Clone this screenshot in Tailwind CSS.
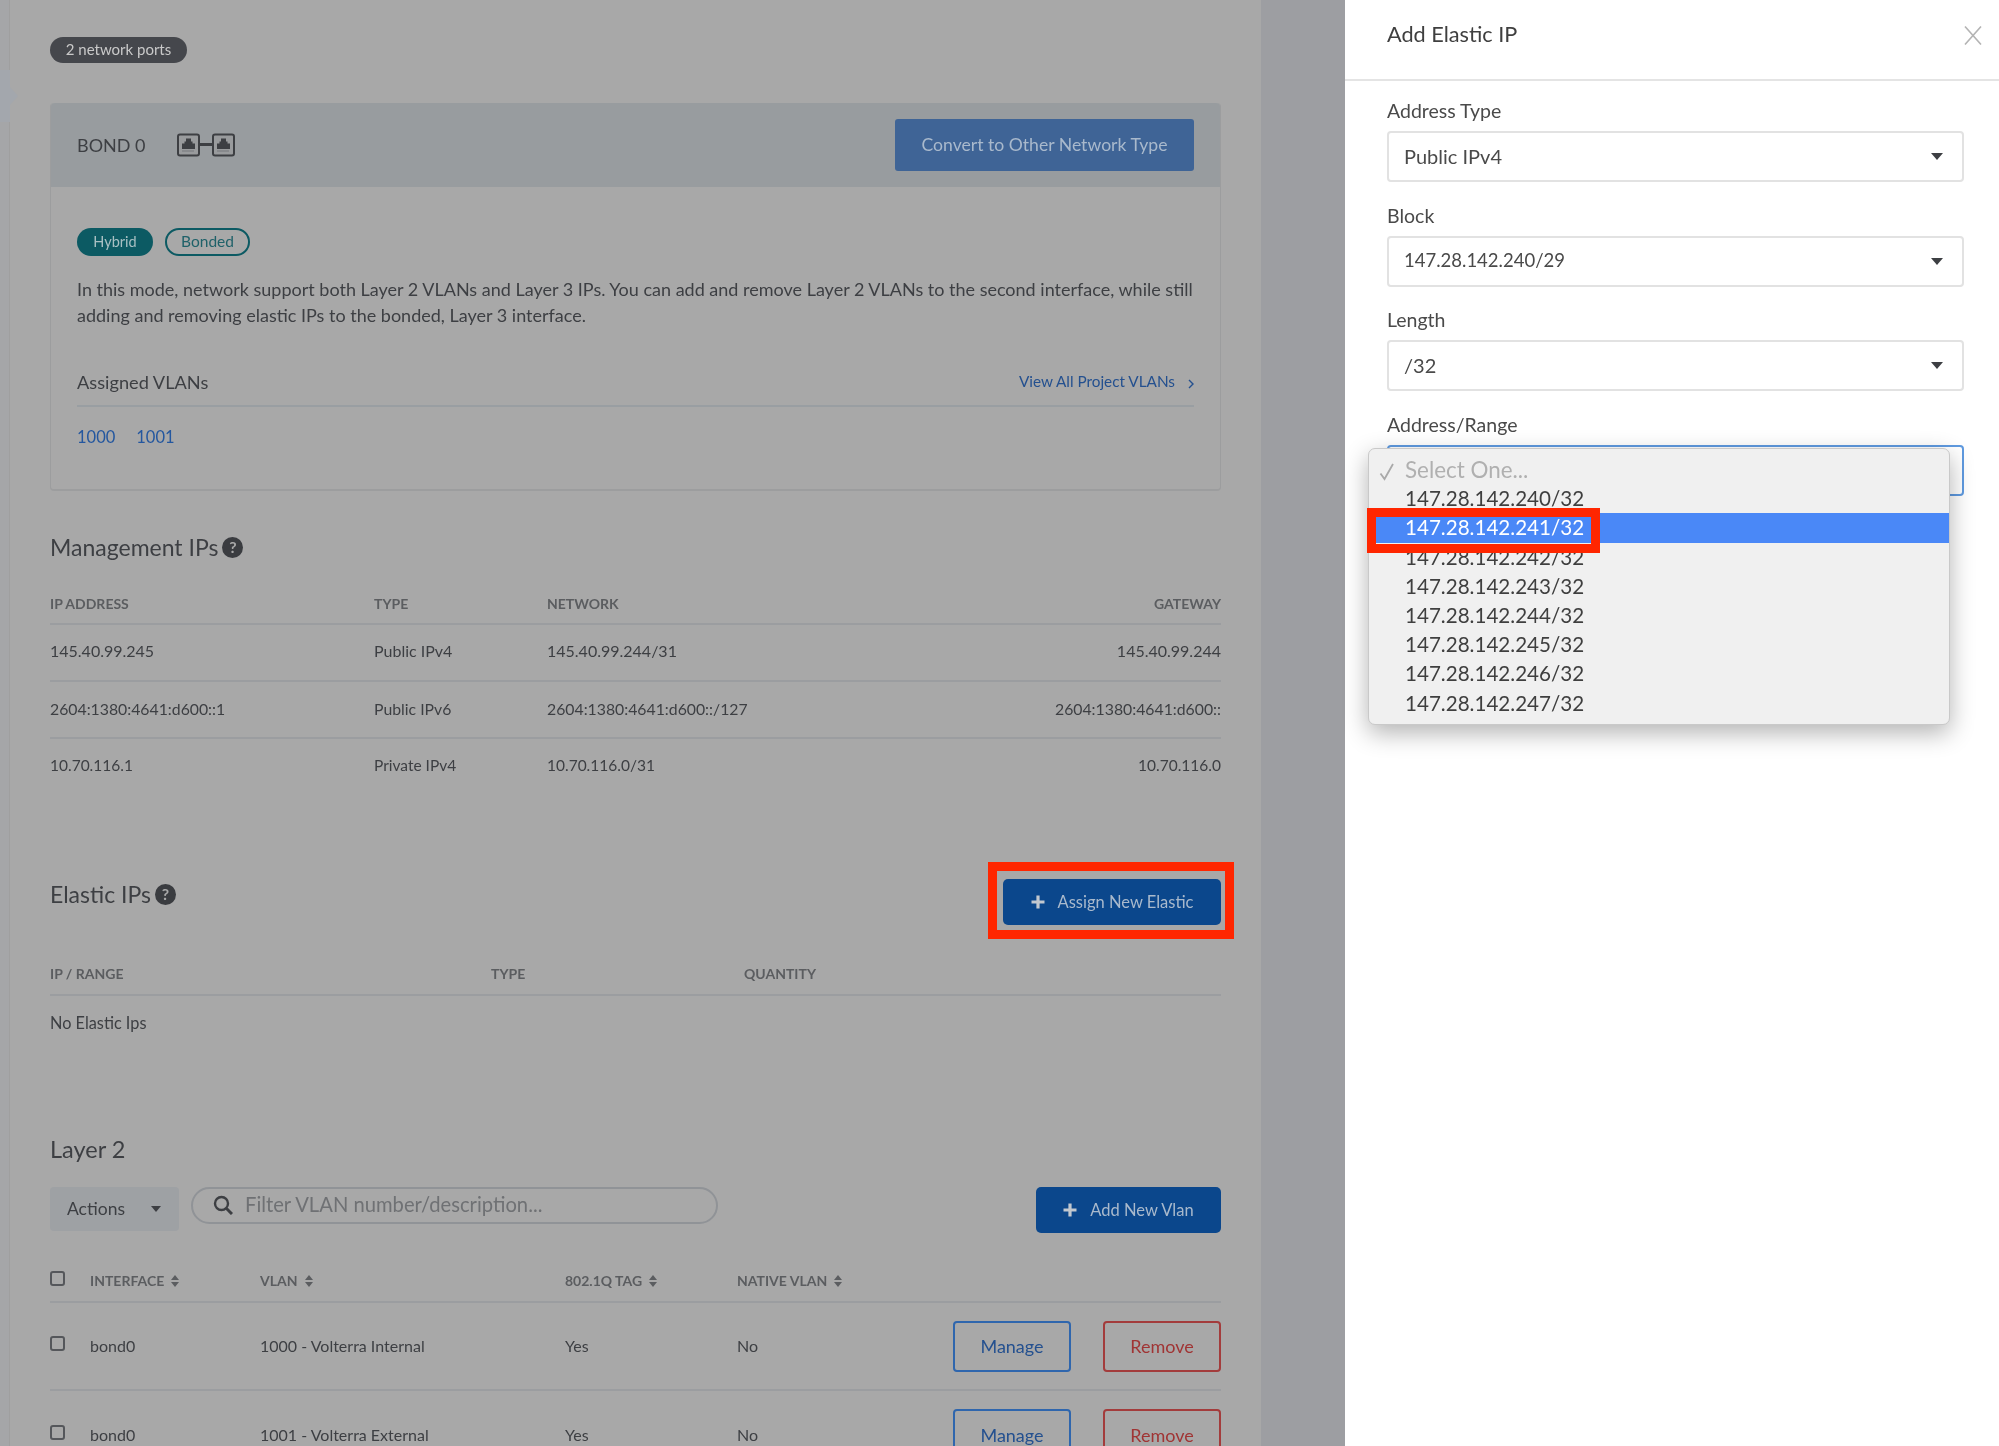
<!DOCTYPE html>
<html lang="en">
<head>
  <meta charset="UTF-8" />
  <title>Add Elastic IP</title>
  <script src="https://cdn.jsdelivr.net/npm/@tailwindcss/browser@4"></script>
</head>
<body class="font-[Lato,sans-serif] bg-[#a6a7a8] text-[#3d3f43]">
<div class="relative flex h-[1446px] w-[1999px] overflow-hidden blur-[0.35px]">

  <!-- left rail -->
  <div class="w-[10px] shrink-0 bg-[#a5a6a8] border-r border-[#9f9f9f]"></div>
  <svg class="absolute left-0 top-[70px]" width="19" height="52" viewBox="0 0 19 52"><path d="M0 0H10V17L18 26L10 35V52H0Z" fill="#a3a7ad"/></svg>

  <!-- main content -->
  <main class="w-[1251px] shrink-0 bg-[#a8a8a8] px-[40px] pt-[37px]">
    <span class="flex h-[26px] w-[137px] items-center justify-center rounded-full bg-[#45474c] pb-[1px] text-[15px] text-[#c9c9c9]">2 network ports</span>

    <!-- bond card -->
    <section class="mt-[40px] h-[388px] rounded-[4px] border-x border-b-2 border-[#9c9d9e]">
      <div class="flex h-[84px] items-center justify-between rounded-t-[4px] bg-[#989c9f] pl-[26px] pr-[26px]">
        <div class="flex items-center gap-[31px]">
          <span class="text-[18px] leading-none">BOND 0</span>
          <svg width="58" height="24" viewBox="0 0 58 24" fill="none">
            <rect x="1" y="1.5" width="21" height="21" rx="2" fill="#999b9d" stroke="#3d3f43" stroke-width="2"/>
            <rect x="36" y="1.5" width="21" height="21" rx="2" fill="#999b9d" stroke="#3d3f43" stroke-width="2"/>
            <path d="M22 11.5H36" stroke="#3d3f43" stroke-width="3"/>
            <path d="M5 16V10.5H7.5V8.5H9V5.5H14V8.5H15.5V10.5H18V16Z" fill="#3d3f43"/>
            <path d="M40 16V10.5H42.5V8.5H44V5.5H49V8.5H50.5V10.5H53V16Z" fill="#3d3f43"/>
            <path d="M5.5 18H17.5M40.5 18H52.5" stroke="#6b6e71" stroke-width="1.5" stroke-dasharray="1 1"/>
          </svg>
        </div>
        <button class="h-[52px] w-[299px] rounded-[3px] bg-[#3f6496] text-[17.6px] text-[#a9b9cc]">Convert to Other Network Type</button>
      </div>
      <div class="pl-[26px] pr-[26px] pt-[41px]">
        <div class="flex gap-[12px]">
          <span class="flex h-[28px] w-[76px] items-center justify-center rounded-full bg-[#0c5a63] pb-[1px] text-[14.5px] text-[#a9c0c3]">Hybrid</span>
          <span class="flex h-[28px] w-[85px] items-center justify-center rounded-full border-2 border-[#0c5a63] pb-[1px] text-[15.5px] text-[#1f6169]">Bonded</span>
        </div>
        <p class="mt-[20px] text-[18px] leading-[26px]">In this mode, network support both Layer 2 VLANs and Layer 3 IPs. You can add and remove Layer 2 VLANs to the second interface, while still adding and removing elastic IPs to the bonded, Layer 3 interface.</p>
        <div class="mt-[42px] flex h-[37px] items-start justify-between border-b-2 border-[#999ea2]">
          <span class="text-[18.2px] leading-[24px]">Assigned VLANs</span>
          <a class="flex items-center gap-[13px] text-[15.3px] leading-[22px] text-[#24508f]">View All Project VLANs
            <svg class="mt-[6px]" width="6" height="10" viewBox="0 0 6 10" fill="none"><path d="M1 1L5 5L1 9" stroke="#24508f" stroke-width="1.4"/></svg>
          </a>
        </div>
        <div class="mt-[18px] flex gap-[21px] text-[16.5px] leading-[24px] text-[#24579f]">
          <a>1000</a><a>1001</a>
        </div>
      </div>
    </section>

    <!-- management ips -->
    <h2 class="mt-[41px] flex h-[30px] items-center gap-[4px] text-[23px] font-normal">Management IPs
      <span class="flex h-[21px] w-[21px] items-center justify-center rounded-full bg-[#3a3c40] text-[16px] font-bold text-[#a8a8a8]">?</span>
    </h2>
    <div class="mt-[28px] grid h-[35px] grid-cols-[324px_173px_1fr_auto] items-center border-b-2 border-[#9b9da0] pb-[7px] text-[14px] font-bold text-[#5b5d60]">
      <span>IP ADDRESS</span><span>TYPE</span><span>NETWORK</span><span>GATEWAY</span>
    </div>
    <div class="grid h-[57px] grid-cols-[324px_173px_1fr_auto] items-center border-b-2 border-[#9b9da0] pb-[4px] text-[16px]">
      <span>145.40.99.245</span><span>Public IPv4</span><span>145.40.99.244/31</span><span>145.40.99.244</span>
    </div>
    <div class="grid h-[57px] grid-cols-[324px_173px_1fr_auto] items-center border-b-2 border-[#9b9da0] pb-[1px] text-[15.8px]">
      <span>2604:1380:4641:d600::1</span><span>Public IPv6</span><span>2604:1380:4641:d600::/127</span><span>2604:1380:4641:d600::</span>
    </div>
    <div class="grid h-[57px] grid-cols-[324px_173px_1fr_auto] items-center pb-[3px] text-[15.5px]">
      <span>10.70.116.1</span><span>Private IPv4</span><span>10.70.116.0/31</span><span>10.70.116.0</span>
    </div>

    <!-- elastic ips -->
    <div class="mt-[83px] flex h-[46px] items-start justify-between">
      <h2 class="flex h-[30px] items-center gap-[4px] text-[23px] font-normal">Elastic IPs
        <span class="flex h-[21px] w-[21px] items-center justify-center rounded-full bg-[#3a3c40] text-[16px] font-bold text-[#a8a8a8]">?</span>
      </h2>
      <div class="relative">
        <button class="flex h-[46px] w-[218px] items-center justify-center gap-[13px] rounded-[5px] bg-[#0b478c] text-[16.5px] text-[#a9b9cc]">
          <svg width="14" height="14" viewBox="0 0 14 14"><path d="M7 0.5V13.5M0.5 7H13.5" stroke="#c2c8cf" stroke-width="3.2"/></svg>
          Assign New Elastic
        </button>
        <div class="absolute -left-[15px] -top-[17px] h-[77px] w-[246px] border-[9px] border-[#ff2600]"></div>
      </div>
    </div>
    <div class="mt-[34px] grid h-[37px] grid-cols-[441px_253px_1fr] items-center border-b-2 border-[#9b9da0] pb-[6px] text-[14px] font-bold text-[#5b5d60]">
      <span>IP / RANGE</span><span>TYPE</span><span>QUANTITY</span>
    </div>
    <div class="flex h-[56px] items-center pb-[2px] text-[16.3px]">No Elastic Ips</div>

    <!-- layer 2 -->
    <h2 class="mt-[82px] flex h-[32px] items-center text-[23.5px] font-normal">Layer 2</h2>
    <div class="mt-[21px] flex h-[46px] items-start">
      <button class="flex h-[44px] w-[129px] items-center justify-between rounded-[4px] bg-[#9ea1a4] pl-[17px] pr-[18px] text-[17.5px]">
        Actions
        <svg width="10" height="6" viewBox="0 0 10 6"><path d="M0 0H10L5 6Z" fill="#3d3f43"/></svg>
      </button>
      <div class="ml-[12px] flex h-[37px] w-[527px] items-center gap-[12px] rounded-full border-2 border-[#909397] pb-[2px] pl-[20px] text-[20.2px] text-[#6f7174]">
        <svg width="20" height="20" viewBox="0 0 20 20" fill="none"><circle cx="8.5" cy="8.5" r="6.5" stroke="#3d3f43" stroke-width="2.4"/><path d="M13.5 13.5L19 19" stroke="#3d3f43" stroke-width="3"/></svg>
        <span>Filter VLAN number/description...</span>
      </div>
      <button class="ml-auto flex h-[46px] w-[185px] items-center justify-center gap-[13px] rounded-[5px] bg-[#0b478c] text-[16.5px] text-[#a9b9cc]">
        <svg width="14" height="14" viewBox="0 0 14 14"><path d="M7 0.5V13.5M0.5 7H13.5" stroke="#c2c8cf" stroke-width="3.2"/></svg>
        Add New Vlan
      </button>
    </div>

    <!-- vlan table -->
    <div class="grid h-[70px] grid-cols-[40px_170px_305px_172px_1fr] items-end border-b-2 border-[#9b9da0] pb-[10px] text-[14px] font-bold text-[#5b5d60]">
      <span class="mb-[5px] h-[15px] w-[15px] rounded-[3px] border-2 border-[#55575b]"></span>
      <span class="flex items-center gap-[7px]">INTERFACE
        <svg width="8" height="12" viewBox="0 0 8 12"><path d="M0 5L4 0L8 5ZM0 7L4 12L8 7Z" fill="#5b5d60"/></svg>
      </span>
      <span class="flex items-center gap-[7px]">VLAN
        <svg width="8" height="12" viewBox="0 0 8 12"><path d="M0 5L4 0L8 5ZM0 7L4 12L8 7Z" fill="#5b5d60"/></svg>
      </span>
      <span class="flex items-center gap-[7px]">802.1Q TAG
        <svg width="8" height="12" viewBox="0 0 8 12"><path d="M0 5L4 0L8 5ZM0 7L4 12L8 7Z" fill="#5b5d60"/></svg>
      </span>
      <span class="flex items-center gap-[7px]">NATIVE VLAN
        <svg width="8" height="12" viewBox="0 0 8 12"><path d="M0 5L4 0L8 5ZM0 7L4 12L8 7Z" fill="#5b5d60"/></svg>
      </span>
    </div>
    <div class="grid h-[88px] grid-cols-[40px_170px_305px_172px_1fr] items-center border-b-2 border-[#9b9da0] text-[16px]">
      <span class="mb-[5px] h-[15px] w-[15px] rounded-[3px] border-2 border-[#55575b]"></span>
      <span>bond0</span><span>1000 - Volterra Internal</span><span>Yes</span>
      <div class="flex items-center justify-between">
        <span>No</span>
        <div class="flex gap-[32px] text-[18px]">
          <button class="h-[51px] w-[118px] rounded-[4px] border-2 border-[#2f66ad] pt-[1px] text-[#24508f]">Manage</button>
          <button class="h-[51px] w-[118px] rounded-[4px] border-2 border-[#a33c3c] pt-[1px] text-[#a03434]">Remove</button>
        </div>
      </div>
    </div>
    <div class="grid h-[88px] grid-cols-[40px_170px_305px_172px_1fr] items-center pb-[1px] text-[16px]">
      <span class="mb-[5px] h-[15px] w-[15px] rounded-[3px] border-2 border-[#55575b]"></span>
      <span>bond0</span><span>1001 - Volterra External</span><span>Yes</span>
      <div class="flex items-center justify-between">
        <span>No</span>
        <div class="flex gap-[32px] text-[18px]">
          <button class="h-[51px] w-[118px] rounded-[4px] border-2 border-[#2f66ad] pt-[1px] text-[#24508f]">Manage</button>
          <button class="h-[51px] w-[118px] rounded-[4px] border-2 border-[#a33c3c] pt-[1px] text-[#a03434]">Remove</button>
        </div>
      </div>
    </div>
  </main>

  <div class="w-[84px] shrink-0 bg-[#9d9ea2]"></div>

  <!-- side panel -->
  <aside class="w-[654px] shrink-0 bg-white text-[#4a4a4a]">
    <div class="flex h-[81px] items-start justify-between border-b-2 border-[#e4e4e4] pl-[42px] pr-[17px]">
      <h1 class="mt-[21px] text-[21.7px] font-normal leading-[26px] text-[#3f3f3f]">Add Elastic IP</h1>
      <svg class="mt-[26px]" width="18" height="19" viewBox="0 0 18 19" fill="none"><path d="M1 0.5L17 18.5M17 0.5L1 18.5" stroke="#b4b4b4" stroke-width="1.6"/></svg>
    </div>
    <div class="pl-[42px] pr-[35px] pt-[18px]">
      <label class="block h-[32px] text-[19.5px] leading-[24px]">Address Type</label>
      <div class="flex h-[51px] items-center justify-between rounded-[4px] border-2 border-[#e2e2e2] pb-[1px] pl-[15px] pr-[19px] text-[20px]">Public IPv4
        <svg width="12" height="7" viewBox="0 0 12 7"><path d="M0 0H12L6 7Z" fill="#3d3f43"/></svg>
      </div>
      <label class="mt-[21.7px] block h-[32px] text-[19.5px] leading-[24px]">Block</label>
      <div class="flex h-[51px] items-center justify-between rounded-[4px] border-2 border-[#e2e2e2] pl-[15px] pr-[19px] text-[18.5px]">147.28.142.240/29
        <svg width="12" height="7" viewBox="0 0 12 7"><path d="M0 0H12L6 7Z" fill="#3d3f43"/></svg>
      </div>
      <label class="mt-[21.7px] block h-[32px] text-[19.5px] leading-[24px]">Length</label>
      <div class="flex h-[51px] items-center justify-between rounded-[4px] border-2 border-[#e2e2e2] pb-[1px] pl-[15px] pr-[19px] text-[20px]">/32
        <svg width="12" height="7" viewBox="0 0 12 7"><path d="M0 0H12L6 7Z" fill="#3d3f43"/></svg>
      </div>
      <label class="mt-[21.7px] block h-[32px] text-[19.5px] leading-[24px]">Address/Range</label>
      <div class="relative h-[51px] rounded-[4px] border-2 border-[#5f9ae0]">

        <!-- open select menu -->
        <div class="absolute -left-[21px] top-[1px] z-10 h-[277px] w-[582px] rounded-[7px] border border-[#c9c9c9] bg-[#f0f0f0] pt-[6px] text-[20.6px] leading-[29.2px] text-[#3f3f3f] shadow-[0_8px_24px_rgba(0,0,0,0.3)]">
          <div class="relative pl-[36px] text-[22.4px] text-[#b0b0b0]">
            <svg class="absolute left-[10px] top-[8px]" width="16" height="18" viewBox="0 0 16 18" fill="none"><path d="M1.5 10.5L5.5 16L14 1" stroke="#a9a9a9" stroke-width="1.8"/></svg>
            Select One...
          </div>
          <div class="pl-[36px]">147.28.142.240/32</div>
          <div class="relative bg-[#4a88f7] pl-[36px] text-white">147.28.142.241/32
            <div class="absolute -left-[2px] -top-[5px] z-10 h-[45px] w-[233px] border-[9px] border-[#ff2600]"></div>
          </div>
          <div class="pl-[36px]">147.28.142.242/32</div>
          <div class="pl-[36px]">147.28.142.243/32</div>
          <div class="pl-[36px]">147.28.142.244/32</div>
          <div class="pl-[36px]">147.28.142.245/32</div>
          <div class="pl-[36px]">147.28.142.246/32</div>
          <div class="pl-[36px]">147.28.142.247/32</div>
        </div>
      </div>
    </div>
  </aside>
</div>
</body>
</html>
